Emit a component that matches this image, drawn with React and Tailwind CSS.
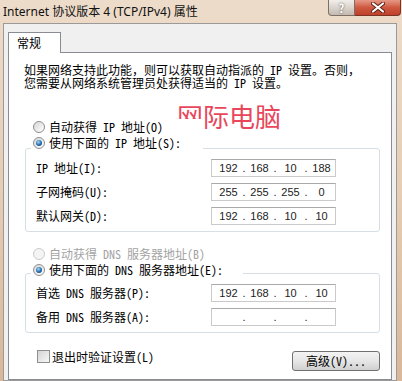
import { Fragment } from "react";

function Radio({ checked, disabled }) {
  return (
    <span
      className={`flex h-[12px] w-[12px] shrink-0 items-center justify-center rounded-full border ${
        disabled
          ? "border-[#cbcbcb] bg-[#f4f4f4]"
          : "border-[#8e8f8f] bg-gradient-to-br from-[#d6d6d6] to-[#ffffff]"
      }`}
    >
      {checked && (
        <span className="h-[6px] w-[6px] rounded-full bg-[radial-gradient(circle_at_40%_35%,#a6dbfa,#2169ad_55%,#0d3b6e)]" />
      )}
    </span>
  );
}

function RadioRow({ label, checked, disabled, width, className = "" }) {
  return (
    <div className={`flex h-[16px] items-center pl-[6px] ${className}`}>
      <span
        className={`relative flex h-[16px] items-center gap-[4px] bg-white pl-[2px] ${width}`}
      >
        <Radio checked={checked} disabled={disabled} />
        <span className={disabled ? "text-[#a3a3a3]" : "text-black"}>
          {label}
        </span>
      </span>
    </div>
  );
}

function IpBox({ parts }) {
  return (
    <div className="flex h-[18px] w-[125px] items-center border border-[#cacaca] border-t-[#a9a9a9] bg-white pl-[3px] font-['Liberation_Sans',sans-serif] text-[11px] text-[#222]">
      {parts.map((p, i) => (
        <Fragment key={i}>
          {i > 0 && <span className="w-[4px] text-center">.</span>}
          <span className="w-[27px] text-center">{p}</span>
        </Fragment>
      ))}
    </div>
  );
}

function Field({ label, parts }) {
  return (
    <div className="flex items-center">
      <span className="w-[175px]">{label}</span>
      <IpBox parts={parts} />
    </div>
  );
}

export default function App() {
  return (
    <div className="flex h-[381px] w-[402px] flex-col overflow-hidden bg-gradient-to-b from-[#eddcca] via-[#e6cdb3] to-[#d9b798] font-['Noto_Sans_Mono_CJK_SC','Noto_Sans_CJK_SC',sans-serif] text-[12px] leading-[12px] text-black">
      {/* Title bar */}
      <div className="flex h-[23px] shrink-0 items-start justify-between">
        <div className="pl-[3px] pt-[5px] font-['Noto_Sans','Noto_Sans_CJK_SC',sans-serif] text-[12px] leading-[14px] text-[#111]">
          Internet 协议版本 4 (TCP/IPv4) 属性
        </div>
        <div className="mr-px flex">
          <div className="flex h-[16px] w-[27px] items-center justify-center rounded-bl-[4px] border border-t-0 border-[#7d6f64] bg-gradient-to-b from-[#f1eeeb] to-[#c3bab1] text-[12px] font-bold leading-[14px] text-white [text-shadow:0_0_2px_#4a3f38]">
            ?
          </div>
          <div className="flex h-[16px] w-[46px] items-center justify-center rounded-br-[4px] border border-l-0 border-t-0 border-[#7b3326] bg-gradient-to-b from-[#e59a87] via-[#cf5840] to-[#c0402a]">
            <svg width="14" height="11" viewBox="0 0 14 11">
              <path d="M2 1.5 L12 9.5 M12 1.5 L2 9.5" stroke="#5b2016" strokeWidth="4" strokeLinecap="round" />
              <path d="M2 1.5 L12 9.5 M12 1.5 L2 9.5" stroke="#ffffff" strokeWidth="2.2" strokeLinecap="round" />
            </svg>
          </div>
        </div>
      </div>

      {/* Client area */}
      <div className="ml-[3px] flex w-[394px] flex-1 flex-col border border-[#9c9a98] bg-[#f0f0f0] px-[4px] pt-[8px]">
        {/* Tab header */}
        <div className="relative z-10 -mb-px flex h-[21px] w-[53px] items-center border border-b-0 border-[#898c95] bg-white pl-[8px]">
          常规
        </div>

        {/* Tab page */}
        <div className="relative flex flex-1 flex-col border border-[#898c95] bg-white pl-[16px] pt-[10px]">
          <p className="-ml-px leading-[13px]">
            如果网络支持此功能，则可以获取自动指派的 IP 设置。否则，
            <br />
            您需要从网络系统管理员处获得适当的 IP 设置。
          </p>

          <div className="absolute left-[168px] top-[50px] font-['Noto_Sans_CJK_SC',sans-serif] text-[26px] leading-[26px] text-[#e8475b]">
            网际电脑
          </div>

          <RadioRow className="mt-[30px]" label="自动获得 IP 地址(O)" width="w-[172px]" />
          <RadioRow className="-mb-[3px]" label="使用下面的 IP 地址(S):" checked width="w-[172px]" />

          <div className="flex w-[355px] flex-col gap-[6px] rounded-[3px] border border-[#d5dfe5] pb-[6px] pl-[10px] pt-[10px]">
            <Field label="IP 地址(I):" parts={["192", "168", "10", "188"]} />
            <Field label="子网掩码(U):" parts={["255", "255", "255", "0"]} />
            <Field label="默认网关(D):" parts={["192", "168", "10", "10"]} />
          </div>

          <RadioRow className="mt-[14px]" label="自动获得 DNS 服务器地址(B)" disabled width="w-[212px]" />
          <RadioRow className="-mb-[5px]" label="使用下面的 DNS 服务器地址(E):" checked width="w-[212px]" />

          <div className="flex w-[355px] flex-col gap-[6px] rounded-[3px] border border-[#d5dfe5] pb-[6px] pl-[10px] pt-[10px]">
            <Field label="首选 DNS 服务器(P):" parts={["192", "168", "10", "10"]} />
            <Field label="备用 DNS 服务器(A):" parts={["", "", "", ""]} />
          </div>

          <div className="mt-[17px] flex w-[355px] items-start justify-between">
            <div className="ml-[12px] flex items-center gap-[2px]">
              <span className="h-[13px] w-[13px] border border-[#8e8f8f] bg-gradient-to-br from-[#d4d4d4] to-[#f7f7f7]" />
              <span className="leading-[13px]">退出时验证设置(L)</span>
            </div>
            <button className="mt-px flex h-[20px] w-[88px] items-center justify-center rounded-[3px] border border-[#707070] bg-gradient-to-b from-[#f3f3f3] via-[#e6e6e6] to-[#d0d0d0] text-[12px] leading-[12px]">
              高级(V)...
            </button>
          </div>
        </div>
      </div>
    </div>
  );
}
